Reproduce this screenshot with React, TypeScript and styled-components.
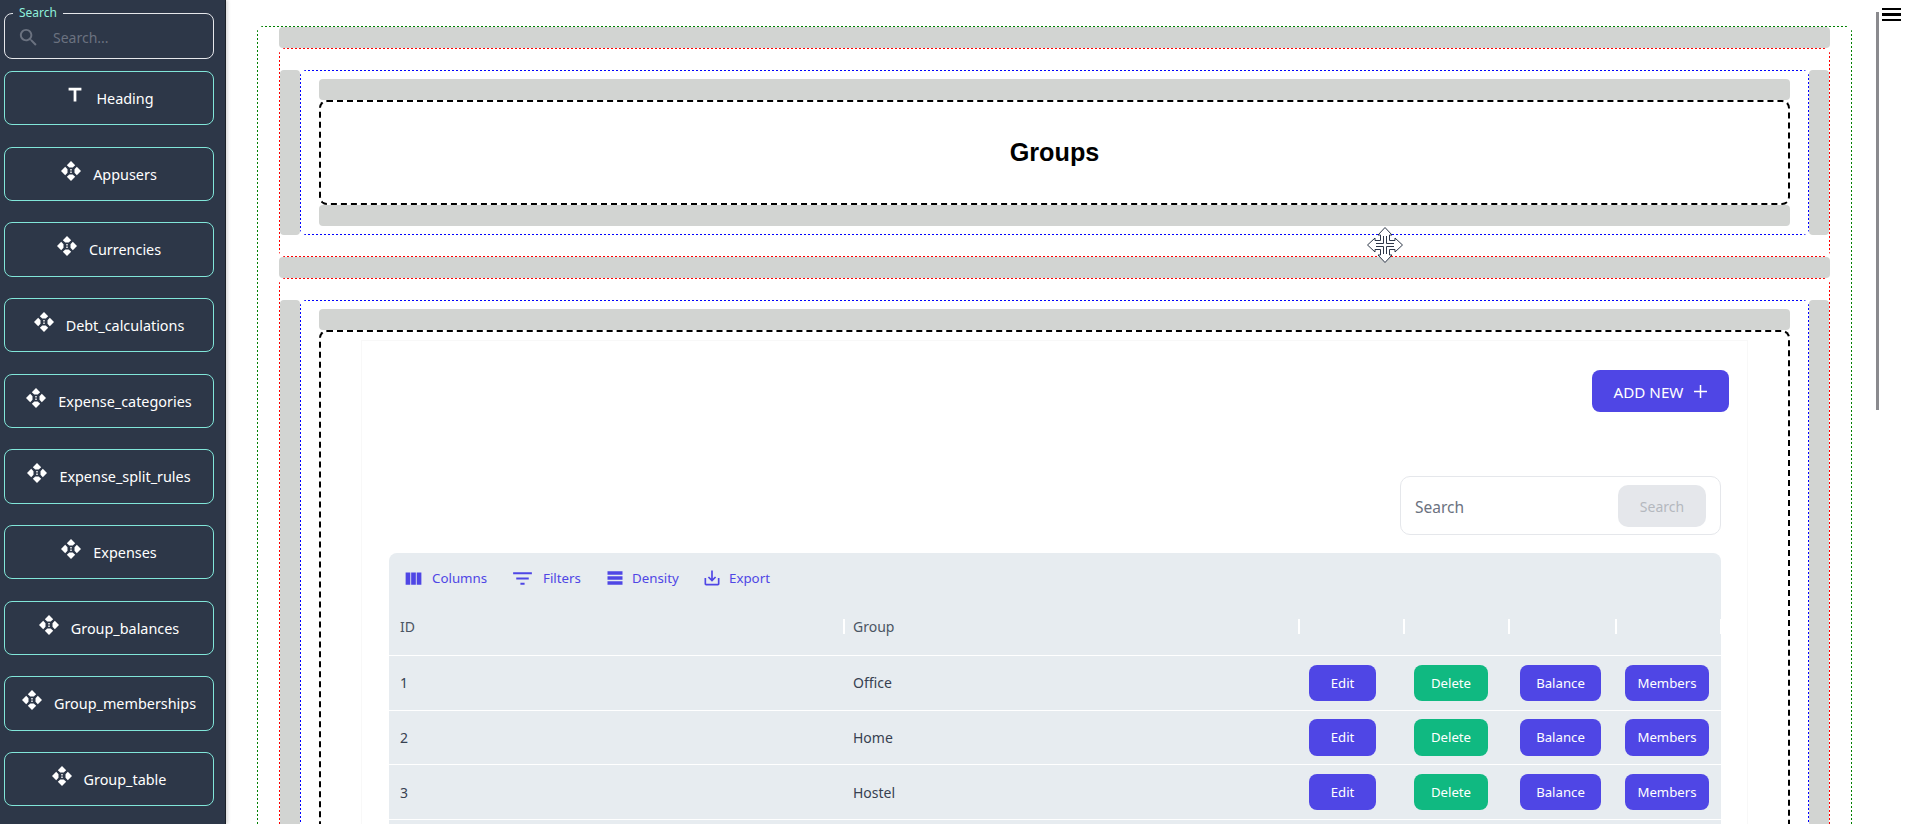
import styled, { createGlobalStyle, css } from "styled-components";

const GlobalStyle = createGlobalStyle`
  html, body {
    margin: 0;
    height: 100%;
    overflow: hidden;
    background: white;
    font-family: "Noto Sans", "Open Sans", sans-serif;
  }
  * { box-sizing: border-box; }
`;

// the builder draws its zones with widely spaced 1px dots
const dottedEdge = (color: string) => css`
  border-radius: 6px;
  background:
    repeating-linear-gradient(to right, ${color} 0 2px, transparent 2px 4px) top / 100% 1px no-repeat,
    repeating-linear-gradient(to right, ${color} 0 2px, transparent 2px 4px) bottom / 100% 1px no-repeat,
    repeating-linear-gradient(to bottom, ${color} 0 2px, transparent 2px 4px) left / 1px 100% no-repeat,
    repeating-linear-gradient(to bottom, ${color} 0 2px, transparent 2px 4px) right / 1px 100% no-repeat;
`;

const Page = styled.div`
  position: relative;
  display: flex;
  width: 1906px;
  height: 824px;
  overflow: hidden;
`;

const Sidebar = styled.aside`
  flex: none;
  width: 226px;
  height: 824px;
  padding: 5px 11px 0 4px;
  background: #2d3748;
  border-right: 1px solid #1c2128;
  box-shadow: 2px 0 3px rgba(0, 0, 0, 0.15);
  display: flex;
  flex-direction: column;
  z-index: 1;
`;

const SearchField = styled.fieldset`
  flex: none;
  margin: 0 0 12px;
  padding: 5px 0 0 12px;
  height: 54px;
  min-width: 0;
  border: 1px solid #e5e7eb;
  border-radius: 8px;
  display: flex;
  align-items: center;
  gap: 13px;
`;

const SearchLegend = styled.legend`
  margin-left: -4px;
  padding: 0 6px;
  font-size: 12px;
  line-height: 16px;
  color: #8ff0dc;
`;

const SearchInput = styled.input`
  flex: 1;
  min-width: 0;
  border: 0;
  outline: 0;
  padding: 0;
  background: transparent;
  color: white;
  font: 14px "Noto Sans", sans-serif;
  &::placeholder {
    color: #6b7280;
  }
`;

const ComponentButton = styled.button<{ $wide?: boolean }>`
  flex: none;
  height: 54.33px;
  margin-bottom: 21.33px;
  padding: 1px 0 0;
  display: flex;
  align-items: center;
  justify-content: center;
  gap: ${(p) => (p.$wide ? "10px" : "12px")};
  background: transparent;
  border: 1px solid #81e6d9;
  border-radius: 8px;
  color: white;
  font: 400 14.4px "Noto Sans", sans-serif;
  svg {
    margin-bottom: 7px;
    flex: none;
  }
`;

const Content = styled.main`
  flex: 1;
  min-width: 0;
  padding: 26px 54px 0 31px;
`;

const GreenZone = styled.div`
  ${dottedEdge("green")}
  padding: 1px 22px;
`;

const DropBar = styled.div`
  height: 21px;
  background: #d2d4d2;
  border-radius: 4px;
`;

const RedZone = styled.div`
  ${dottedEdge("red")}
  padding: 22px 1px;
  display: flex;
`;

const SideBar = styled.div`
  flex: none;
  width: 20px;
  background: #d2d4d2;
  border-radius: 4px;
`;

const BlueZone = styled.div`
  ${dottedEdge("blue")}
  flex: 1;
  min-width: 0;
  padding: 9px 19px;
`;

const WidgetBox = styled.div`
  border: 2px dashed black;
  border-radius: 8px;
`;

const HeadingBox = styled(WidgetBox)`
  height: 105px;
  display: flex;
  align-items: center;
  justify-content: center;
`;

const Title = styled.h1`
  margin: 0;
  font: bold 25.2px "Liberation Sans", Arial, sans-serif;
  color: black;
`;

const Card = styled.section`
  margin: 8px 40px 0 40px;
  padding: 29px 26px 0 27px;
  border: 1px solid #f8f8f8;
  display: flex;
  flex-direction: column;
`;

const AddButton = styled.button`
  align-self: flex-end;
  width: 137px;
  height: 42px;
  margin: 0 -8px 64px 0;
  padding: 1px 0 0 1px;
  display: flex;
  align-items: center;
  justify-content: center;
  gap: 10px;
  border: 0;
  border-radius: 8px;
  background: #4f46e5;
  color: white;
  font: 400 15.2px "Noto Sans", sans-serif;
`;

const SearchBox = styled.div`
  align-self: flex-end;
  width: 321px;
  height: 59px;
  padding: 0 14px;
  margin-bottom: 18px;
  display: flex;
  align-items: center;
  justify-content: space-between;
  border: 1px solid #e5e7eb;
  border-radius: 10px;
  font-size: 15.5px;
  line-height: 24px;
  color: #6b7280;
`;

const SearchLabel = styled.span`
  padding-top: 2px;
`;

const SearchButton = styled.button`
  width: 88px;
  height: 42px;
  padding: 2px 0 0;
  border: 0;
  border-radius: 10px;
  background: #e5e7eb;
  color: #b4b8be;
  font: 14px "Noto Sans", sans-serif;
`;

const Table = styled.div`
  background: #e7ecf0;
  border-radius: 8px 8px 0 0;
`;

const Toolbar = styled.div`
  height: 46px;
  padding: 4px 0 0 17px;
  display: flex;
  align-items: center;
`;

const ToolButton = styled.span<{ $width: number; $gap: number }>`
  width: ${(p) => p.$width}px;
  flex: none;
  display: flex;
  align-items: center;
  gap: ${(p) => p.$gap}px;
  color: #4f46e5;
  font-size: 13.3px;
`;

const ToolIcon = styled.svg`
  flex: none;
  fill: #4f46e5;
`;

const gridColumns = "455px 455px 105px 105px 107px 1fr";

const HeaderRow = styled.div`
  height: 56px;
  padding-bottom: 2px;
  display: grid;
  grid-template-columns: ${gridColumns};
  font-size: 14px;
  color: #4b5563;
`;

const HeaderCell = styled.div`
  display: flex;
  align-items: center;
  justify-content: space-between;
  padding-left: 9px;
  &:first-child {
    padding-left: 11px;
  }
`;

const ColumnGrip = styled.span`
  width: 2px;
  height: 15px;
  margin-right: -1px;
  background: white;
`;

const Row = styled.div`
  height: 54.67px;
  display: grid;
  grid-template-columns: ${gridColumns};
  align-items: center;
  border-top: 1.5px solid white;
  font-size: 14px;
  color: #374151;
`;

const Cell = styled.div`
  padding-left: 9px;
  &:first-child {
    padding-left: 11px;
  }
`;

const ActionCell = styled.div<{ $inset: number }>`
  padding-left: ${(p) => p.$inset}px;
`;

const ActionButton = styled.button<{ $width: number; $green?: boolean }>`
  display: block;
  width: ${(p) => p.$width}px;
  height: 36.6px;
  padding: 0;
  border: 0;
  border-radius: 8px;
  background: ${(p) => (p.$green ? "#10b981" : "#4f46e5")};
  color: white;
  font: 400 13.2px "Noto Sans", sans-serif;
`;

const ScrollThumb = styled.div`
  position: absolute;
  left: 1876px;
  top: 12px;
  width: 3px;
  height: 398px;
  background: #8a8a8e;
`;

const Hamburger = styled.div`
  position: absolute;
  left: 1882px;
  top: 8px;
  width: 19px;
  display: flex;
  flex-direction: column;
  gap: 3px;
  span {
    height: 2.4px;
    background: black;
  }
`;

const DragCursor = styled.svg`
  position: absolute;
  left: 1366px;
  top: 226px;
  z-index: 2;
`;

const MoveIcon = () => (
  <svg width="20" height="20" viewBox="0 0 20 20" fill="white">
    <path d="M10 0l4.200 4.200-2.500 2.300H8.300L5.800 4.200zM20 10l-4.200 4.200-2.300-2.500V8.300l2.300-2.500zM10 20l-4.200-4.200 2.500-2.300h3.400l2.500 2.300zM0 10l4.200-4.200 2.300 2.500v3.400l-2.300 2.500z" />
    <path d="M9.300 8h1.400v1.400H9.300zM9.300 10.600h1.400V12H9.300z" />
  </svg>
);

const TitleIcon = () => (
  <svg width="22" height="22" viewBox="0 0 24 24" fill="white">
    <path d="M5 4v3h5.500v12h3V7H19V4z" />
  </svg>
);

const components = [
  "Appusers",
  "Currencies",
  "Debt_calculations",
  "Expense_categories",
  "Expense_split_rules",
  "Expenses",
  "Group_balances",
  "Group_memberships",
  "Group_table",
];

const groups = [
  { id: 1, name: "Office" },
  { id: 2, name: "Home" },
  { id: 3, name: "Hostel" },
];

const App = () => {
  return (
    <Page>
      <GlobalStyle />
      <Sidebar>
        <SearchField>
          <SearchLegend>Search</SearchLegend>
          <svg width="23" height="23" viewBox="0 0 24 24" fill="#6b7280" style={{ flex: "none" }}>
            <path d="M15.500 14h-.79l-.28-.27C15.410 12.590 16 11.110 16 9.500 16 5.910 13.090 3 9.500 3S3 5.910 3 9.500 5.910 16 9.500 16c1.610 0 3.090-.59 4.230-1.570l.27.28v.79l5 4.990L20.490 19l-4.990-5zm-6 0C7.010 14 5 11.990 5 9.500S7.010 5 9.500 5 14 7.010 14 9.500 11.990 14 9.500 14z" />
          </svg>
          <SearchInput placeholder="Search..." />
        </SearchField>
        <ComponentButton $wide>
          <TitleIcon />
          Heading
        </ComponentButton>
        {components.map((name) => (
          <ComponentButton key={name}>
            <MoveIcon />
            {name}
          </ComponentButton>
        ))}
      </Sidebar>

      <Content>
        <GreenZone>
          <DropBar />
          <RedZone>
            <SideBar />
            <BlueZone>
              <DropBar />
              <HeadingBox>
                <Title>Groups</Title>
              </HeadingBox>
              <DropBar />
            </BlueZone>
            <SideBar />
          </RedZone>
          <DropBar />
          <RedZone>
            <SideBar />
            <BlueZone>
              <DropBar />
              <WidgetBox>
                <Card>
                  <AddButton>
                    ADD NEW
                    <svg width="15" height="15" viewBox="0 0 15 15" stroke="white" strokeWidth="1.5">
                      <path d="M7.500 1v13M1 7.500h13" />
                    </svg>
                  </AddButton>
                  <SearchBox>
                    <SearchLabel>Search</SearchLabel>
                    <SearchButton>Search</SearchButton>
                  </SearchBox>
                  <Table>
                    <Toolbar>
                      <ToolButton $width={107} $gap={8}>
                        <ToolIcon width="21" height="21" viewBox="0 0 24 24" style={{ margin: "0 0 0 -3px" }}>
                          <path d="M14.670 5v14H9.330V5h5.340zm1 14H21V5h-5.330v14zm-7.340 0V5H3v14h5.330z" />
                        </ToolIcon>
                        Columns
                      </ToolButton>
                      <ToolButton $width={94} $gap={8}>
                        <ToolIcon width="25" height="25" viewBox="0 0 24 24" style={{ margin: "0 0 0 -3px" }}>
                          <path d="M10 18h4v-2h-4v2zM3 6v2h18V6H3zm3 7h12v-2H6v2z" />
                        </ToolIcon>
                        Filters
                      </ToolButton>
                      <ToolButton $width={97} $gap={7}>
                        <ToolIcon width="20" height="20" viewBox="0 0 24 24" style={{ margin: "0 0 0 -2px" }}>
                          <path d="M21 8H3V4h18v4zm0 2H3v4h18v-4zm0 6H3v4h18v-4z" />
                        </ToolIcon>
                        Density
                      </ToolButton>
                      <ToolButton $width={90} $gap={7}>
                        <ToolIcon width="20" height="20" viewBox="0 0 24 24" style={{ margin: "0 0 0 -2px" }}>
                          <path d="M19 12v7H5v-7H3v7c0 1.100.9 2 2 2h14c1.100 0 2-.9 2-2v-7h-2zm-6 .67l2.590-2.580L17 11.500l-5 5-5-5 1.410-1.410L11 12.670V3h2z" />
                        </ToolIcon>
                        Export
                      </ToolButton>
                    </Toolbar>
                    <HeaderRow>
                      <HeaderCell>
                        ID
                        <ColumnGrip />
                      </HeaderCell>
                      <HeaderCell>
                        Group
                        <ColumnGrip />
                      </HeaderCell>
                      <HeaderCell>
                        <span />
                        <ColumnGrip />
                      </HeaderCell>
                      <HeaderCell>
                        <span />
                        <ColumnGrip />
                      </HeaderCell>
                      <HeaderCell>
                        <span />
                        <ColumnGrip />
                      </HeaderCell>
                      <HeaderCell>
                        <span />
                        <ColumnGrip />
                      </HeaderCell>
                    </HeaderRow>
                    {groups.map((group) => (
                      <Row key={group.id}>
                        <Cell>{group.id}</Cell>
                        <Cell>{group.name}</Cell>
                        <ActionCell $inset={10}>
                          <ActionButton $width={67}>Edit</ActionButton>
                        </ActionCell>
                        <ActionCell $inset={10}>
                          <ActionButton $width={74} $green>
                            Delete
                          </ActionButton>
                        </ActionCell>
                        <ActionCell $inset={11}>
                          <ActionButton $width={81}>Balance</ActionButton>
                        </ActionCell>
                        <ActionCell $inset={9}>
                          <ActionButton $width={84}>Members</ActionButton>
                        </ActionCell>
                      </Row>
                    ))}
                    <Row />
                  </Table>
                </Card>
              </WidgetBox>
            </BlueZone>
            <SideBar />
          </RedZone>
        </GreenZone>
      </Content>

      <DragCursor width="38" height="38" viewBox="-19 -19 38 38" fill="white" stroke="#2d3748" strokeWidth="1">
        <path d="M0-17.500L7-10H4.500v5.500H10V-7L17.500 0 10 7V4.500H4.500V10H7L0 17.500-7 10h2.500V4.500H-10V7L-17.500 0-10-7v2.500h5.500V-10H-7z" />
        <path d="M-1.500-9v7.500H-9M1.500-9v7.500H9M-1.500 9V1.500H-9M1.500 9V1.500H9" fill="none" />
      </DragCursor>
      <ScrollThumb />
      <Hamburger>
        <span />
        <span />
        <span />
      </Hamburger>
    </Page>
  );
};

export default App;
